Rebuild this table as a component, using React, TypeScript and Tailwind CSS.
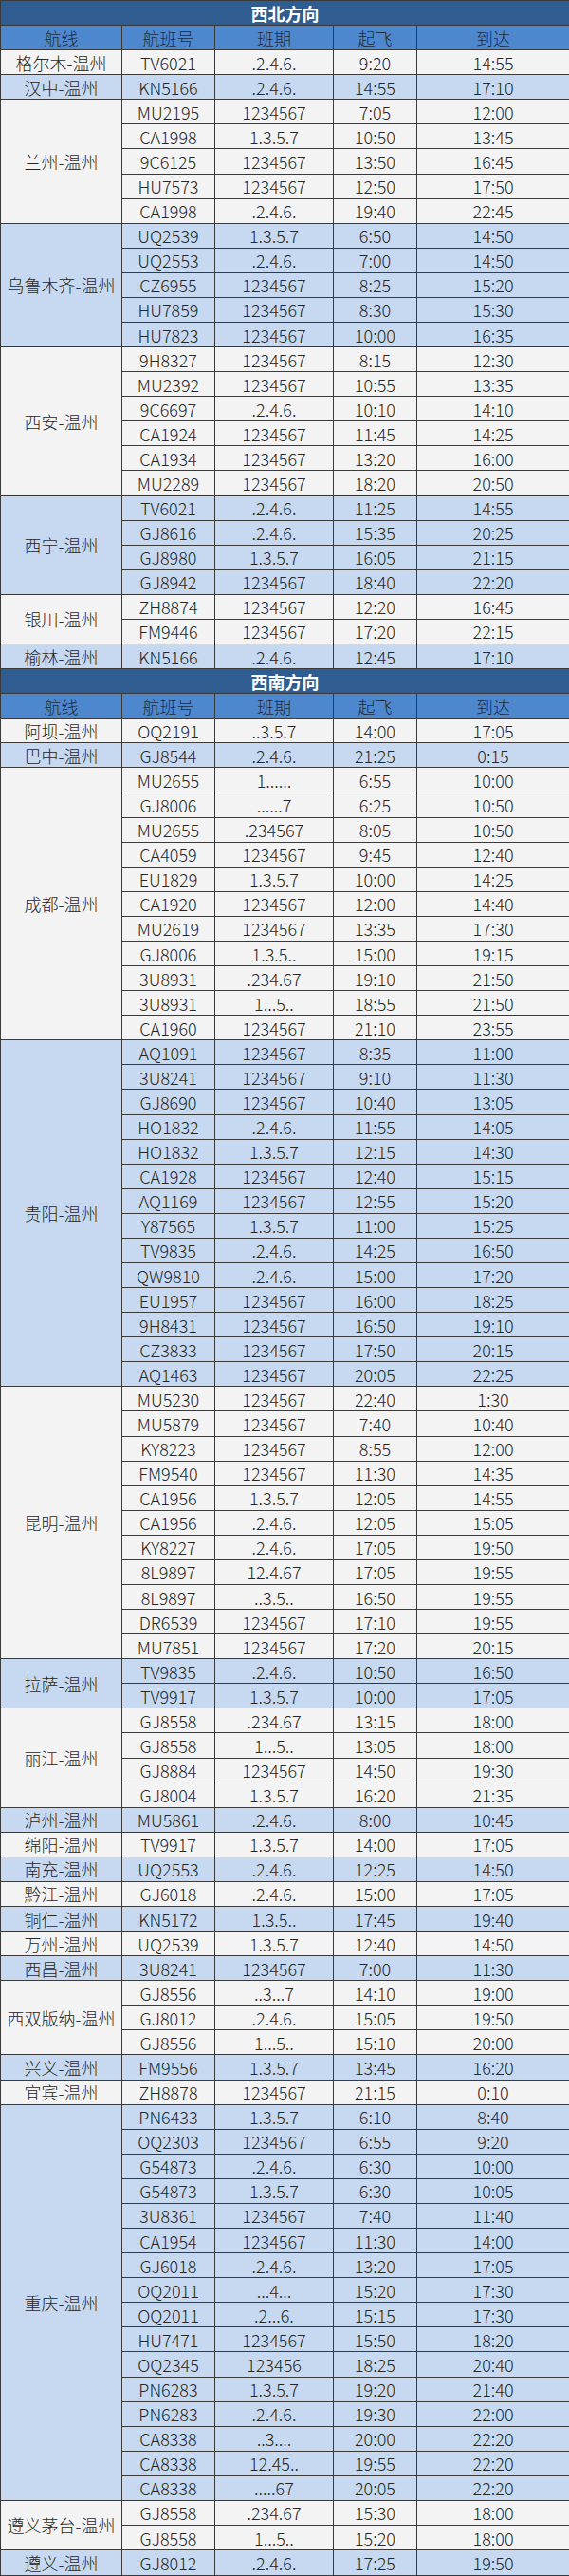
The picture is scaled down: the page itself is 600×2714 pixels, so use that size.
type Flight = [string, string, string, string];
type Group = { route: string; flights: Flight[] };

const northwest: Group[] = [
  { route: "格尔木-温州", flights: [["TV6021", ".2.4.6.", "9:20", "14:55"]] },
  { route: "汉中-温州", flights: [["KN5166", ".2.4.6.", "14:55", "17:10"]] },
  {
    route: "兰州-温州",
    flights: [
      ["MU2195", "1234567", "7:05", "12:00"],
      ["CA1998", "1.3.5.7", "10:50", "13:45"],
      ["9C6125", "1234567", "13:50", "16:45"],
      ["HU7573", "1234567", "12:50", "17:50"],
      ["CA1998", ".2.4.6.", "19:40", "22:45"],
    ],
  },
  {
    route: "乌鲁木齐-温州",
    flights: [
      ["UQ2539", "1.3.5.7", "6:50", "14:50"],
      ["UQ2553", ".2.4.6.", "7:00", "14:50"],
      ["CZ6955", "1234567", "8:25", "15:20"],
      ["HU7859", "1234567", "8:30", "15:30"],
      ["HU7823", "1234567", "10:00", "16:35"],
    ],
  },
  {
    route: "西安-温州",
    flights: [
      ["9H8327", "1234567", "8:15", "12:30"],
      ["MU2392", "1234567", "10:55", "13:35"],
      ["9C6697", ".2.4.6.", "10:10", "14:10"],
      ["CA1924", "1234567", "11:45", "14:25"],
      ["CA1934", "1234567", "13:20", "16:00"],
      ["MU2289", "1234567", "18:20", "20:50"],
    ],
  },
  {
    route: "西宁-温州",
    flights: [
      ["TV6021", ".2.4.6.", "11:25", "14:55"],
      ["GJ8616", ".2.4.6.", "15:35", "20:25"],
      ["GJ8980", "1.3.5.7", "16:05", "21:15"],
      ["GJ8942", "1234567", "18:40", "22:20"],
    ],
  },
  {
    route: "银川-温州",
    flights: [
      ["ZH8874", "1234567", "12:20", "16:45"],
      ["FM9446", "1234567", "17:20", "22:15"],
    ],
  },
  { route: "榆林-温州", flights: [["KN5166", ".2.4.6.", "12:45", "17:10"]] },
];

const southwest: Group[] = [
  { route: "阿坝-温州", flights: [["OQ2191", "..3.5.7", "14:00", "17:05"]] },
  { route: "巴中-温州", flights: [["GJ8544", ".2.4.6.", "21:25", "0:15"]] },
  {
    route: "成都-温州",
    flights: [
      ["MU2655", "1......", "6:55", "10:00"],
      ["GJ8006", "......7", "6:25", "10:50"],
      ["MU2655", ".234567", "8:05", "10:50"],
      ["CA4059", "1234567", "9:45", "12:40"],
      ["EU1829", "1.3.5.7", "10:00", "14:25"],
      ["CA1920", "1234567", "12:00", "14:40"],
      ["MU2619", "1234567", "13:35", "17:30"],
      ["GJ8006", "1.3.5..", "15:00", "19:15"],
      ["3U8931", ".234.67", "19:10", "21:50"],
      ["3U8931", "1...5..", "18:55", "21:50"],
      ["CA1960", "1234567", "21:10", "23:55"],
    ],
  },
  {
    route: "贵阳-温州",
    flights: [
      ["AQ1091", "1234567", "8:35", "11:00"],
      ["3U8241", "1234567", "9:10", "11:30"],
      ["GJ8690", "1234567", "10:40", "13:05"],
      ["HO1832", ".2.4.6.", "11:55", "14:05"],
      ["HO1832", "1.3.5.7", "12:15", "14:30"],
      ["CA1928", "1234567", "12:40", "15:15"],
      ["AQ1169", "1234567", "12:55", "15:20"],
      ["Y87565", "1.3.5.7", "11:00", "15:25"],
      ["TV9835", ".2.4.6.", "14:25", "16:50"],
      ["QW9810", ".2.4.6.", "15:00", "17:20"],
      ["EU1957", "1234567", "16:00", "18:25"],
      ["9H8431", "1234567", "16:50", "19:10"],
      ["CZ3833", "1234567", "17:50", "20:15"],
      ["AQ1463", "1234567", "20:05", "22:25"],
    ],
  },
  {
    route: "昆明-温州",
    flights: [
      ["MU5230", "1234567", "22:40", "1:30"],
      ["MU5879", "1234567", "7:40", "10:40"],
      ["KY8223", "1234567", "8:55", "12:00"],
      ["FM9540", "1234567", "11:30", "14:35"],
      ["CA1956", "1.3.5.7", "12:05", "14:55"],
      ["CA1956", ".2.4.6.", "12:05", "15:05"],
      ["KY8227", ".2.4.6.", "17:05", "19:50"],
      ["8L9897", "12.4.67", "17:05", "19:55"],
      ["8L9897", "..3.5..", "16:50", "19:55"],
      ["DR6539", "1234567", "17:10", "19:55"],
      ["MU7851", "1234567", "17:20", "20:15"],
    ],
  },
  {
    route: "拉萨-温州",
    flights: [
      ["TV9835", ".2.4.6.", "10:50", "16:50"],
      ["TV9917", "1.3.5.7", "10:00", "17:05"],
    ],
  },
  {
    route: "丽江-温州",
    flights: [
      ["GJ8558", ".234.67", "13:15", "18:00"],
      ["GJ8558", "1...5..", "13:05", "18:00"],
      ["GJ8884", "1234567", "14:50", "19:30"],
      ["GJ8004", "1.3.5.7", "16:20", "21:35"],
    ],
  },
  { route: "泸州-温州", flights: [["MU5861", ".2.4.6.", "8:00", "10:45"]] },
  { route: "绵阳-温州", flights: [["TV9917", "1.3.5.7", "14:00", "17:05"]] },
  { route: "南充-温州", flights: [["UQ2553", ".2.4.6.", "12:25", "14:50"]] },
  { route: "黔江-温州", flights: [["GJ6018", ".2.4.6.", "15:00", "17:05"]] },
  { route: "铜仁-温州", flights: [["KN5172", "1.3.5..", "17:45", "19:40"]] },
  { route: "万州-温州", flights: [["UQ2539", "1.3.5.7", "12:40", "14:50"]] },
  { route: "西昌-温州", flights: [["3U8241", "1234567", "7:00", "11:30"]] },
  {
    route: "西双版纳-温州",
    flights: [
      ["GJ8556", "..3...7", "14:10", "19:00"],
      ["GJ8012", ".2.4.6.", "15:05", "19:50"],
      ["GJ8556", "1...5..", "15:10", "20:00"],
    ],
  },
  { route: "兴义-温州", flights: [["FM9556", "1.3.5.7", "13:45", "16:20"]] },
  { route: "宜宾-温州", flights: [["ZH8878", "1234567", "21:15", "0:10"]] },
  {
    route: "重庆-温州",
    flights: [
      ["PN6433", "1.3.5.7", "6:10", "8:40"],
      ["OQ2303", "1234567", "6:55", "9:20"],
      ["G54873", ".2.4.6.", "6:30", "10:00"],
      ["G54873", "1.3.5.7", "6:30", "10:05"],
      ["3U8361", "1234567", "7:40", "11:40"],
      ["CA1954", "1234567", "11:30", "14:00"],
      ["GJ6018", ".2.4.6.", "13:20", "17:05"],
      ["OQ2011", "...4...", "15:20", "17:30"],
      ["OQ2011", ".2...6.", "15:15", "17:30"],
      ["HU7471", "1234567", "15:50", "18:20"],
      ["OQ2345", "123456", "18:25", "20:40"],
      ["PN6283", "1.3.5.7", "19:20", "21:40"],
      ["PN6283", ".2.4.6.", "19:30", "22:00"],
      ["CA8338", "..3....", "20:00", "22:20"],
      ["CA8338", "12.45..", "19:55", "22:20"],
      ["CA8338", ".....67", "20:05", "22:20"],
    ],
  },
  {
    route: "遵义茅台-温州",
    flights: [
      ["GJ8558", ".234.67", "15:30", "18:00"],
      ["GJ8558", "1...5..", "15:20", "18:00"],
    ],
  },
  { route: "遵义-温州", flights: [["GJ8012", ".2.4.6.", "17:25", "19:50"]] },
];

const cell = "border border-[#3a3a3a] p-0 text-center leading-none whitespace-nowrap";

function Section({ title, groups }: { title: string; groups: Group[] }) {
  return (
    <>
      <tr className="h-[26px] bg-[#2f5d92]">
        <td colSpan={5} className={cell + " font-bold text-white"}>
          {title}
        </td>
      </tr>
      <tr className="h-[26px] bg-[#4d88cf] text-[#1d2c40]">
        <td className={cell}>航线</td>
        <td className={cell}>航班号</td>
        <td className={cell}>班期</td>
        <td className={cell}>起飞</td>
        <td className={cell}>到达</td>
      </tr>
      {groups.map((g, gi) => {
        const bg = gi % 2 === 0 ? "bg-[#f3f3f3]" : "bg-[#c6d9f0]";
        return g.flights.map((f, fi) => (
          <tr key={g.route + fi} className={"h-[26px] " + bg}>
            {fi === 0 && (
              <td rowSpan={g.flights.length} className={cell}>
                {g.route}
              </td>
            )}
            <td className={cell}>{f[0]}</td>
            <td className={cell}>{f[1]}</td>
            <td className={cell}>{f[2]}</td>
            <td className={cell}>{f[3]}</td>
          </tr>
        ));
      })}
    </>
  );
}

export default function App() {
  return (
    <div className="w-[600px] bg-white font-['Noto_Sans_CJK_SC','Noto_Sans',sans-serif] font-light text-[18px] text-[#262626]">
      <table className="w-[600px] h-[2714px] table-fixed border-collapse">
        <colgroup>
          <col className="w-[128px]" />
          <col className="w-[98px]" />
          <col className="w-[125px]" />
          <col className="w-[88px]" />
          <col className="w-[161px]" />
        </colgroup>
        <tbody>
          <Section title="西北方向" groups={northwest} />
          <Section title="西南方向" groups={southwest} />
        </tbody>
      </table>
    </div>
  );
}
